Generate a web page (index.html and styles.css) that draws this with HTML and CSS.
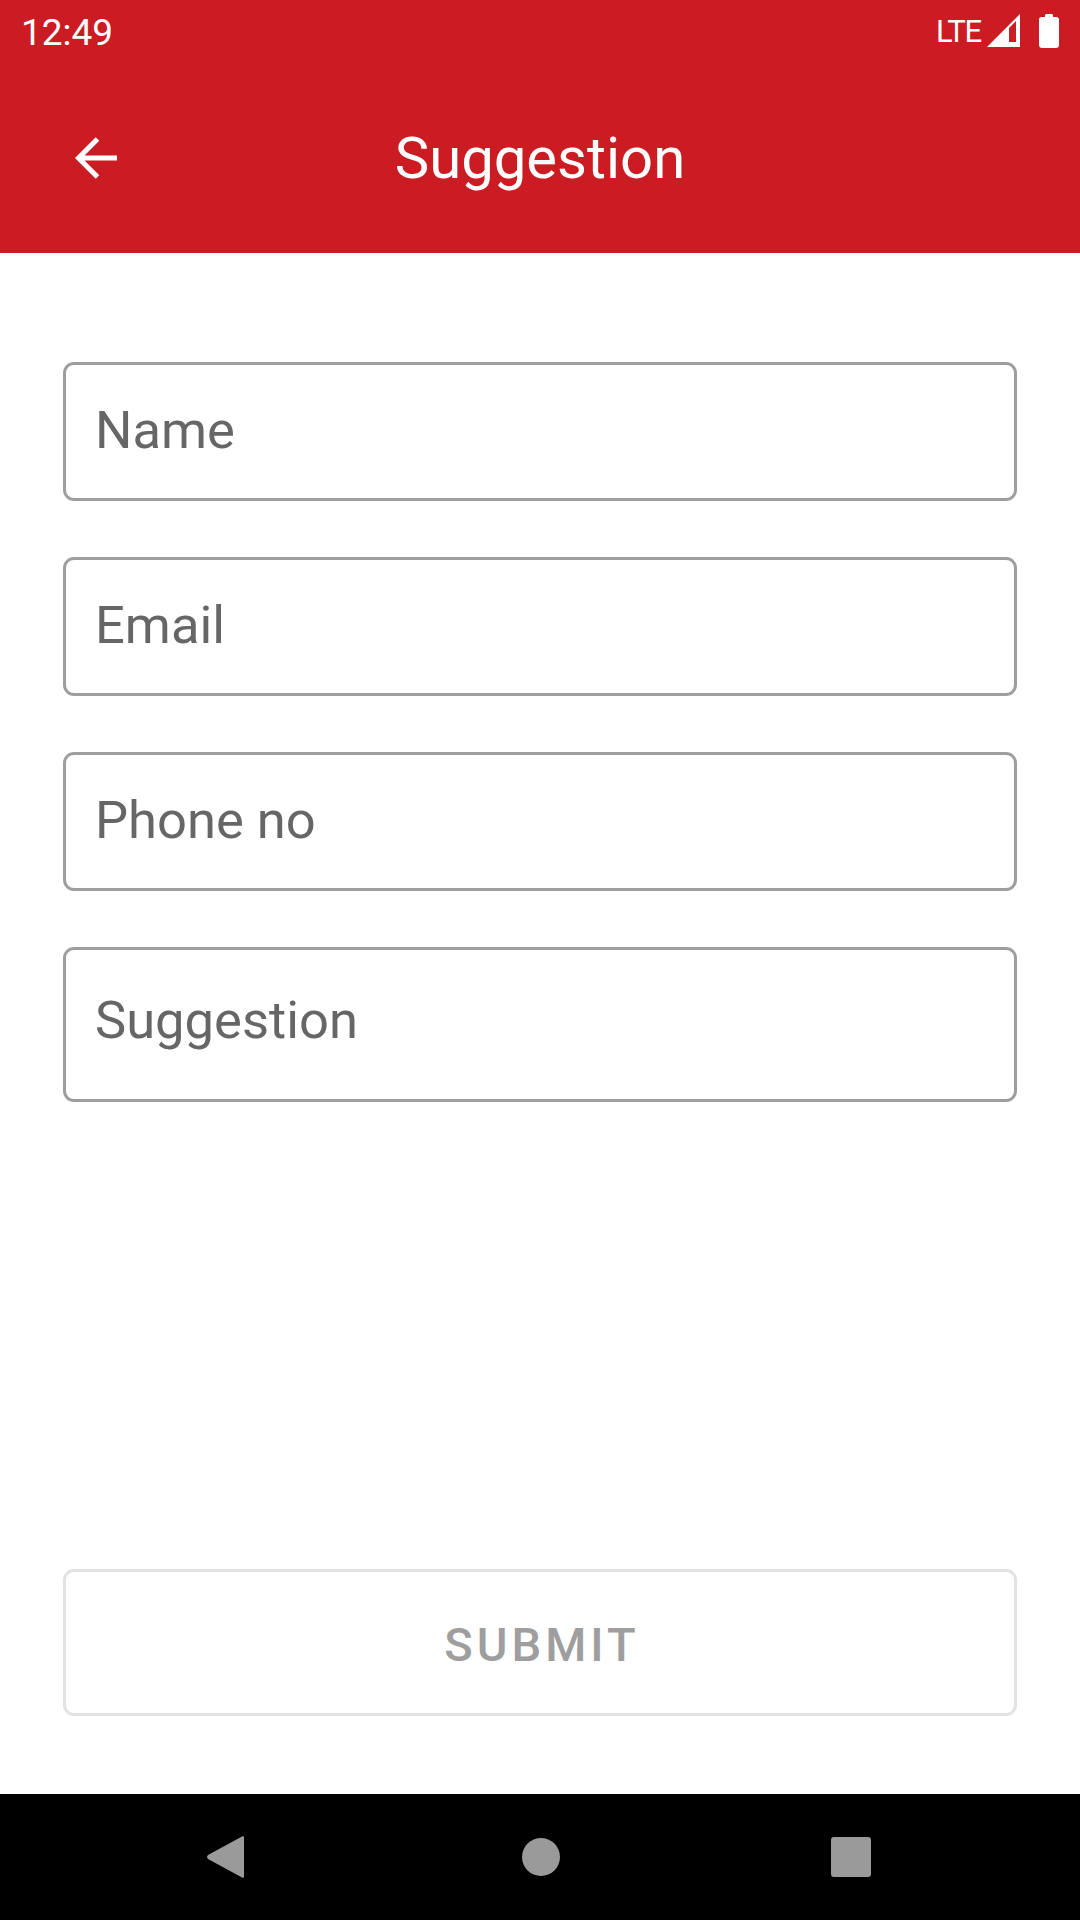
FILE: index.html
```html
<!DOCTYPE html>
<html lang="en">
<head>
  <meta charset="UTF-8">
  <meta name="viewport" content="width=device-width, initial-scale=1.0">
  <title>Suggestion</title>
  <link rel="stylesheet" href="styles.css">
</head>
<body>
  <div class="status-bar">
    <span class="time">12:49</span>
    <div class="status-icons">
      <span class="lte">LTE</span>
      <svg class="signal" viewBox="0 0 33 33" width="33" height="33">
        <path fill="#fff" fill-rule="evenodd" d="M33 0V33H0ZM29 7 22 14V28H29Z"/>
      </svg>
      <svg class="battery" viewBox="0 0 20 34" width="20" height="34">
        <path fill="#fff" d="M6 1.500C6 .7 6.700 0 7.500 0h5c.8 0 1.500.7 1.500 1.500V3h3.500C19 3 20 4 20 5.500V31c0 1.700-1.300 3-3 3H3c-1.700 0-3-1.300-3-3V5.500C0 4 1 3 2.500 3H6Z"/>
      </svg>
    </div>
  </div>

  <header class="toolbar">
    <svg class="back-arrow" viewBox="0 0 42 42" width="42" height="42">
      <path fill="none" stroke="#fff" stroke-width="5" d="M42 21H4M22.500 2 3.500 21l19 19"/>
    </svg>
    <h1>Suggestion</h1>
  </header>

  <main class="content">
    <form class="form">
      <div class="field">Name</div>
      <div class="field">Email</div>
      <div class="field">Phone no</div>
      <div class="field field-multi">Suggestion</div>
    </form>
    <button type="button" class="submit" disabled>SUBMIT</button>
  </main>

  <nav class="nav-bar">
    <svg viewBox="0 0 37 42" width="37" height="42">
      <path fill="#9a9a9a" d="M35 .5c1-.8 2-.2 2 1v39c0 1.200-1 1.800-2 1L1 23c-1.300-1-1.300-3 0-4Z"/>
    </svg>
    <span class="nav-home"></span>
    <span class="nav-recent"></span>
  </nav>
</body>
</html>
```

FILE: styles.css
```css
* { box-sizing: border-box; }
body {
  margin: 0;
  width: 1080px;
  height: 1920px;
  display: flex;
  flex-direction: column;
  font-family: Roboto, "Liberation Sans", sans-serif;
  background-color: #fff;
}
.status-bar {
  height: 63px;
  display: flex;
  justify-content: space-between;
  align-items: flex-start;
  padding: 0 21px 0 21px;
  background-color: #cb1c23;
  color: #fff;
}
.time {
  font-size: 37px;
  line-height: 42px;
  margin-top: 12px;
}
.status-icons {
  display: flex;
  align-items: flex-start;
  margin-top: 14px;
}
.lte {
  font-size: 31px;
  line-height: 36px;
  margin-right: 6px;
  letter-spacing: -1.200px;
}
.battery { margin-left: 19px; }
.toolbar {
  position: relative;
  height: 190px;
  display: flex;
  align-items: center;
  justify-content: center;
  background-color: #cb1c23;
  color: #fff;
}
.back-arrow {
  position: absolute;
  left: 75px;
  top: 74px;
}
h1 {
  margin: 0;
  font-size: 58px;
  font-weight: 400;
}
.content {
  flex: 1;
  display: flex;
  flex-direction: column;
  justify-content: space-between;
  padding: 109px 63px 78px;
}
.form {
  display: flex;
  flex-direction: column;
  gap: 56px;
}
.field {
  height: 139px;
  display: flex;
  align-items: center;
  padding: 0 29px 3px;
  border: 3px solid #9e9e9e;
  border-radius: 11px;
  font-size: 52.500px;
  color: #666;
}
.field-multi {
  height: 155px;
  align-items: flex-start;
  padding-top: 39px;
}
.submit {
  height: 147px;
  padding: 4px 0 0 4px;
  background: #fff;
  border: 3px solid #e2e2e2;
  border-radius: 11px;
  font-family: inherit;
  font-size: 47px;
  font-weight: 500;
  letter-spacing: 4px;
  color: #9e9e9e;
}
.nav-bar {
  height: 126px;
  display: flex;
  align-items: center;
  background-color: #000;
  padding-left: 207px;
}
.nav-home {
  width: 38px;
  height: 38px;
  margin-left: 278px;
  border-radius: 50%;
  background-color: #9a9a9a;
}
.nav-recent {
  width: 40px;
  height: 40px;
  margin-left: 271px;
  border-radius: 3px;
  background-color: #9a9a9a;
}
```
